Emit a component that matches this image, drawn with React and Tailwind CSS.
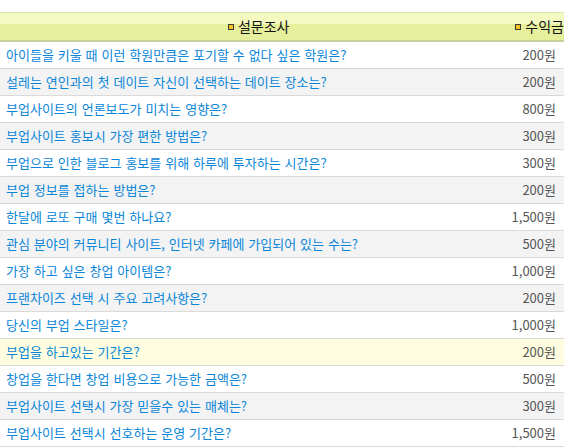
import React from "react";

const rows = [
  ["아이들을 키울 때 이런 학원만큼은 포기할 수 없다 싶은 학원은?", "200원"],
  ["설레는 연인과의 첫 데이트 자신이 선택하는 데이트 장소는?", "200원"],
  ["부업사이트의 언론보도가 미치는 영향은?", "800원"],
  ["부업사이트 홍보시 가장 편한 방법은?", "300원"],
  ["부업으로 인한 블로그 홍보를 위해 하루에 투자하는 시간은?", "300원"],
  ["부업 정보를 접하는 방법은?", "200원"],
  ["한달에 로또 구매 몇번 하나요?", "1,500원"],
  ["관심 분야의 커뮤니티 사이트, 인터넷 카페에 가입되어 있는 수는?", "500원"],
  ["가장 하고 싶은 창업 아이템은?", "1,000원"],
  ["프랜차이즈 선택 시 주요 고려사항은?", "200원"],
  ["당신의 부업 스타일은?", "1,000원"],
  ["부업을 하고있는 기간은?", "200원"],
  ["창업을 한다면 창업 비용으로 가능한 금액은?", "500원"],
  ["부업사이트 선택시 가장 믿을수 있는 매체는?", "300원"],
  ["부업사이트 선택시 선호하는 운영 기간은?", "1,500원"],
];

function Bullet() {
  return <span className="inline-block w-[6px] h-[6px] bg-[#f5c518] border border-[#3a3a3a] mr-[4px] shrink-0" />;
}

export default function App() {
  return (
    <div className="w-[564px] h-[447px] overflow-hidden bg-white pt-[12px]" style={{ fontFamily: '"Noto Sans CJK KR", "Noto Sans", sans-serif' }}>
      <div className="border-t border-[#dfe6b0] border-b-2 border-b-[#c9cf9a] bg-[linear-gradient(#f3f9c0_0px,#f3f9c0_11px,#e6f09c_11px,#e6f09c_100%)] h-[30px] flex items-center text-[14px] text-[#111]">
        <div className="w-[516px] flex items-center justify-center pl-[2px]">
          <Bullet />
          <span>설문조사</span>
        </div>
        <div className="flex-1 flex items-center whitespace-nowrap">
          <Bullet />
          <span>수익금</span>
        </div>
      </div>
      {rows.map(([q, a], i) => {
        const bg = i === 11 ? "bg-[#fffddf]" : i % 2 === 1 ? "bg-[#f3f3f3]" : "bg-white";
        return (
          <div key={i} className={`${bg} h-[27px] border-b border-[#dadada] flex items-center text-[13px]`}>
            <div className="flex-1 pl-[6px] text-[#0a86d8] whitespace-nowrap [word-spacing:1px]">{q}</div>
            <div className="pr-[8px] text-[#555] whitespace-nowrap">{a}</div>
          </div>
        );
      })}
    </div>
  );
}
